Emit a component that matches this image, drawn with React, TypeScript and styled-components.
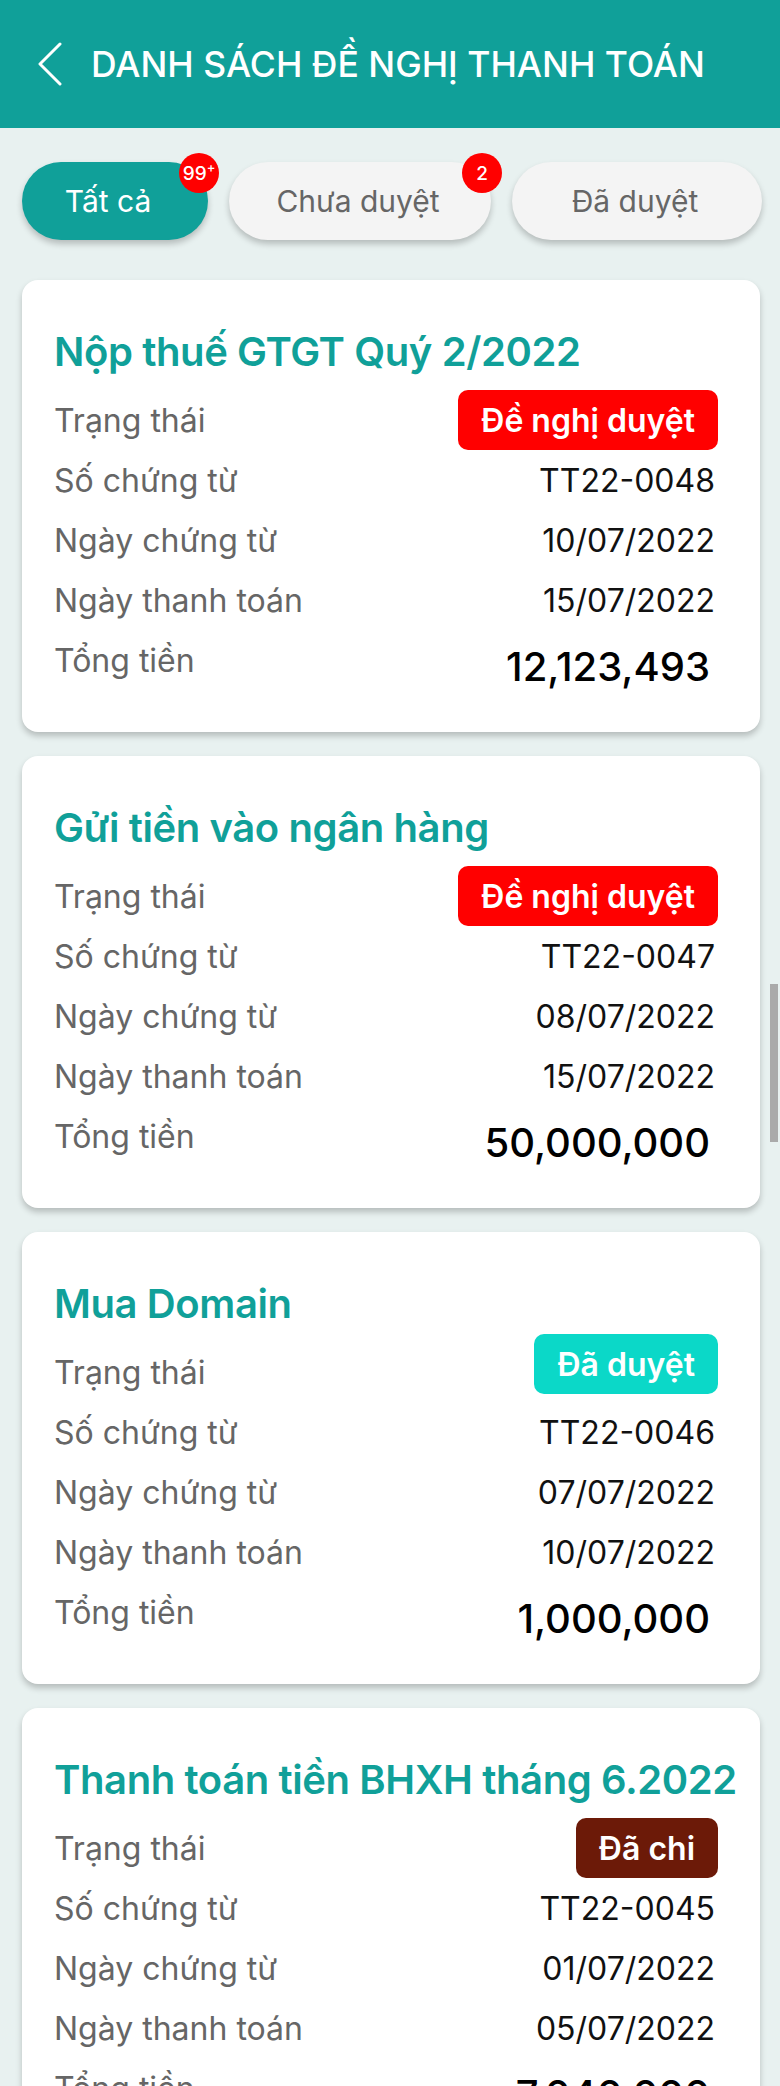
import React from "react";
import styled, { createGlobalStyle } from "styled-components";

type Status = "pending" | "approved" | "paid";

interface Payment {
  title: string;
  status: Status;
  code: string;
  docDate: string;
  payDate: string;
  total: string;
}

const payments: Payment[] = [
  { title: "Nộp thuế GTGT Quý 2/2022", status: "pending", code: "TT22-0048", docDate: "10/07/2022", payDate: "15/07/2022", total: "12,123,493" },
  { title: "Gửi tiền vào ngân hàng", status: "pending", code: "TT22-0047", docDate: "08/07/2022", payDate: "15/07/2022", total: "50,000,000" },
  { title: "Mua Domain", status: "approved", code: "TT22-0046", docDate: "07/07/2022", payDate: "10/07/2022", total: "1,000,000" },
  { title: "Thanh toán tiền BHXH tháng 6.2022", status: "paid", code: "TT22-0045", docDate: "01/07/2022", payDate: "05/07/2022", total: "7,040,000" },
];

const statusInfo: Record<Status, { label: string; color: string }> = {
  pending: { label: "Đề nghị duyệt", color: "#ff0000" },
  approved: { label: "Đã duyệt", color: "#0bd8c8" },
  paid: { label: "Đã chi", color: "#6c1a08" },
};

const GlobalStyle = createGlobalStyle`
  html, body { margin: 0; padding: 0; overflow: hidden; }
  body { font-family: Inter, "Noto Sans", sans-serif; background: #e8f1f0; }
  * { box-sizing: border-box; }
`;

const Page = styled.div`
  position: relative;
  width: 780px;
  height: 2086px;
  overflow: hidden;
  background: #e8f1f0;
`;

const Header = styled.header`
  height: 128px;
  background: #10a099;
  display: flex;
  align-items: center;
  padding-left: 37px;
  gap: 28px;
`;

const HeaderTitle = styled.h1`
  margin: 0;
  color: #ffffff;
  font-size: 35.5px;
  font-weight: 500;
  white-space: nowrap;
`;

const Tabs = styled.nav`
  display: grid;
  grid-template-columns: 186px 262px 1fr;
  column-gap: 21px;
  padding: 34px 18px 0 22px;
`;

const Tab = styled.div<{ $active?: boolean; $shift?: number }>`
  position: relative;
  height: 78px;
  border-radius: 39px;
  display: flex;
  align-items: center;
  justify-content: center;
  padding-right: ${(p) => p.$shift ?? 4}px;
  font-size: 30px;
  color: ${(p) => (p.$active ? "#ffffff" : "#666666")};
  background: ${(p) => (p.$active ? "#10a099" : "#f4f4f4")};
  box-shadow: 0 4px 6px rgba(0, 0, 0, 0.22);
`;

const CountBadge = styled.span`
  position: absolute;
  top: -9px;
  right: -11px;
  width: 40px;
  height: 40px;
  border-radius: 50%;
  background: #ff0000;
  color: #ffffff;
  display: flex;
  align-items: center;
  justify-content: center;
  font-size: 19px;
  font-weight: 500;
  line-height: 1;

  sup {
    font-size: 13px;
    margin-top: -12px;
  }
`;

const List = styled.main`
  display: flex;
  flex-direction: column;
  gap: 24px;
  padding: 40px 20px 0 22px;
`;

const Card = styled.section`
  background: #ffffff;
  border-radius: 16px;
  padding: 48px 45px 42px 32px;
  box-shadow: 0 4px 6px rgba(0, 0, 0, 0.22);
`;

const CardTitle = styled.h2`
  margin: 0 0 14px;
  font-size: 40px;
  line-height: 48px;
  font-weight: 600;
  letter-spacing: -0.4px;
  color: #10a099;
  white-space: nowrap;
`;

const Row = styled.div`
  display: flex;
  align-items: center;
  justify-content: space-between;
  height: 60px;
`;

const Label = styled.span`
  font-size: 32px;
  color: #666666;
  white-space: nowrap;
`;

const Value = styled.span`
  font-size: 32px;
  color: #111111;
  white-space: nowrap;
`;

const Amount = styled.span`
  font-size: 40px;
  font-weight: 500;
  color: #000000;
  margin: 12px 5px 0 0;
  white-space: nowrap;
`;

const StatusBadge = styled.span<{ $color: string; $lift?: boolean }>`
  height: 60px;
  padding: 0 23px;
  border-radius: 10px;
  display: flex;
  align-items: center;
  background: ${(p) => p.$color};
  color: #ffffff;
  font-size: 32px;
  font-weight: 600;
  margin-bottom: ${(p) => (p.$lift ? "16px" : "0")};
  margin-right: -3px;
`;

const ScrollThumb = styled.div`
  position: absolute;
  top: 984px;
  right: 2px;
  width: 8px;
  height: 158px;
  background: #aaaaaa;
`;

const BackIcon = () => (
  <svg width="26" height="44" viewBox="0 0 26 44" fill="none">
    <path d="M23 2 L3 22 L23 42" stroke="#ffffff" strokeWidth="3" strokeLinecap="round" strokeLinejoin="round" />
  </svg>
);

export default function App() {
  return (
    <Page>
      <GlobalStyle />
      <Header>
        <BackIcon />
        <HeaderTitle>DANH SÁCH ĐỀ NGHỊ THANH TOÁN</HeaderTitle>
      </Header>
      <Tabs>
        <Tab $active $shift={14}>
          Tất cả
          <CountBadge>
            99<sup>+</sup>
          </CountBadge>
        </Tab>
        <Tab>
          Chưa duyệt
          <CountBadge>2</CountBadge>
        </Tab>
        <Tab>Đã duyệt</Tab>
      </Tabs>
      <List>
        {payments.map((p) => {
          const s = statusInfo[p.status];
          return (
            <Card key={p.code}>
              <CardTitle>{p.title}</CardTitle>
              <Row>
                <Label>Trạng thái</Label>
                <StatusBadge $color={s.color} $lift={p.status === "approved"}>
                  {s.label}
                </StatusBadge>
              </Row>
              <Row>
                <Label>Số chứng từ</Label>
                <Value>{p.code}</Value>
              </Row>
              <Row>
                <Label>Ngày chứng từ</Label>
                <Value>{p.docDate}</Value>
              </Row>
              <Row>
                <Label>Ngày thanh toán</Label>
                <Value>{p.payDate}</Value>
              </Row>
              <Row>
                <Label>Tổng tiền</Label>
                <Amount>{p.total}</Amount>
              </Row>
            </Card>
          );
        })}
      </List>
      <ScrollThumb />
    </Page>
  );
}
